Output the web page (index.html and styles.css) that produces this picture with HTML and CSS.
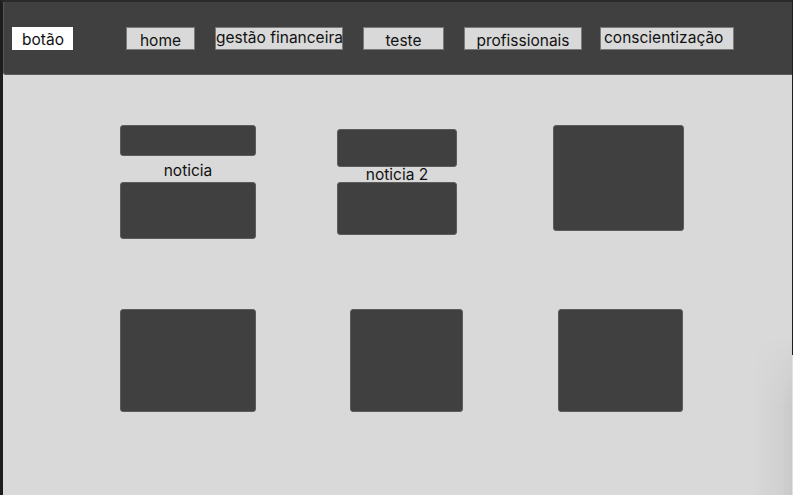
FILE: index.html
```html
<!DOCTYPE html>
<html lang="pt">
<head>
<meta charset="utf-8">
<title>Página</title>
<link rel="stylesheet" href="styles.css">
</head>
<body>
<div class="frame">
  <header class="topbar">
    <nav class="nav">
      <span class="btn btn-main">botão</span>
      <span class="btn btn-home">home</span>
      <span class="btn btn-fin">gestão financeira</span>
      <span class="btn btn-teste">teste</span>
      <span class="btn btn-prof">profissionais</span>
      <span class="btn btn-consc">conscientização</span>
    </nav>
  </header>
  <main class="content">
    <div class="row row-1">
      <div class="news news-1">
        <div class="block block-top"></div>
        <div class="news-title">noticia</div>
        <div class="block block-bottom"></div>
      </div>
      <div class="news news-2">
        <div class="block block-top"></div>
        <div class="news-title">noticia 2</div>
        <div class="block block-bottom"></div>
      </div>
      <div class="block tile tile-3"></div>
    </div>
    <div class="row row-2">
      <div class="block tile tile-4"></div>
      <div class="block tile tile-5"></div>
      <div class="block tile tile-6"></div>
    </div>
    <div class="edge-shade"></div>
  </main>
</div>
</body>
</html>
```

FILE: styles.css
```css
* { box-sizing: border-box; }

html, body {
  margin: 0;
  padding: 0;
  width: 793px;
  height: 495px;
  overflow: hidden;
  background: #d9d9d9;
  font-family: Inter, "Noto Sans", sans-serif;
  color: #111;
}

.frame {
  width: 793px;
  height: 495px;
  display: flex;
  flex-direction: column;
  border-left: 3px solid #1d1d1d;
  border-top: 2px solid #2a2a2a;
  border-right: 1px solid #1d1d1d;
}

.topbar {
  height: 73px;
  background: #404040;
  border-left: 1px solid #555;
  border-bottom: 1px solid #5a5a5a;
  border-bottom-left-radius: 3px;
  padding: 25px 0 0 8px;
}

.nav {
  display: flex;
  align-items: flex-start;
  gap: 20px;
}

.btn {
  display: block;
  height: 23px;
  font-size: 15.5px;
  line-height: 18px;
  background: #d9d9d9;
  border: 1px solid #7a7a7a;
  text-align: center;
  white-space: nowrap;
  padding-top: 4px;
}

.btn-main {
  width: 61px;
  background: #fff;
  border-color: #fff;
  text-align: left;
  padding-left: 9px;
  padding-top: 3px;
}
.btn-home { width: 69px; margin-left: 33px; padding-top: 4px; }
.btn-fin { width: 128px; padding-top: 1px; padding-left: 0; padding-right: 0; }
.btn-teste { width: 81px; padding-top: 4px; }
.btn-prof { width: 118px; padding-top: 4px; }
.btn-consc { width: 134px; margin-left: -2px; padding-top: 1px; text-align: left; padding-left: 3px; }

.content {
  flex: 1;
  position: relative;
  background: #d9d9d9;
  padding-top: 50px;
  padding-left: 117px;
}

.row {
  display: flex;
  align-items: flex-start;
}

.row-2 { margin-top: 70px; }

.block {
  background: #404040;
  border: 1px solid #5c5c5c;
  border-radius: 3px;
}

.news {
  display: flex;
  flex-direction: column;
}

.news-title {
  font-size: 15.5px;
  text-align: center;
  position: relative;
  z-index: 1;
}

.news-1 { width: 136px; }
.news-1 .block-top { height: 31px; }
.news-1 .news-title { height: 26px; line-height: 29px; }
.news-1 .block-bottom { height: 57px; }

.news-2 { width: 120px; margin-left: 81px; margin-top: 4px; }
.news-2 .block-top { height: 38px; }
.news-2 .news-title { height: 15px; line-height: 15px; }
.news-2 .block-bottom { height: 53px; }

.tile-3 { width: 131px; height: 106px; margin-left: 96px; }
.tile-4 { width: 136px; height: 103px; }
.tile-5 { width: 113px; height: 103px; margin-left: 94px; }
.tile-6 { width: 125px; height: 103px; margin-left: 95px; }

.edge-shade {
  position: absolute;
  right: -1px;
  top: 280px;
  bottom: 0;
  width: 40px;
  border-right: 1px solid #e2e2e2;
}

.edge-shade::before {
  content: "";
  position: absolute;
  inset: -20px 0 0 0;
  background: linear-gradient(to right, rgba(0,0,0,0) 0%, rgba(0,0,0,0.04) 75%, rgba(0,0,0,0.07) 100%);
  -webkit-mask-image: linear-gradient(to bottom, transparent 0%, #000 45%);
  mask-image: linear-gradient(to bottom, transparent 0%, #000 45%);
}
```
